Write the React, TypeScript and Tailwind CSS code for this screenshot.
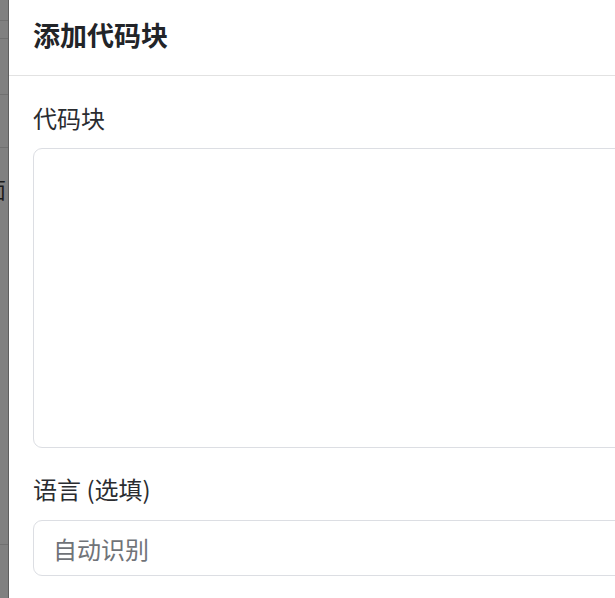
import React from 'react';

const font = { fontFamily: '"Noto Sans CJK SC", "Noto Sans", sans-serif' };

const BackdropStrip: React.FC = () => (
  <div className="relative w-[8px] shrink-0 bg-[#808080] overflow-hidden">
    <div className="h-[21px] border-b border-[#707070]" />
    <div className="h-[18px] border-b border-[#707070]" />
    <div className="h-[56px] border-b border-[#707070]" />
    <div className="h-[53px] border-b border-[#707070]" />
    <div className="h-[397px] border-b border-[#707070]" />
    <div className="absolute left-[-16px] top-[174px] text-[22px] leading-[28px] text-[#1a1a1a]" style={font}>
      面
    </div>
  </div>
);

export default function App() {
  return (
    <div className="flex h-[598px] w-full overflow-hidden bg-white" style={font}>
      <BackdropStrip />
      <div className="w-[900px] shrink-0 border-l border-[#5e5e5e] bg-white">
        <div className="h-[76px] border-b border-[#e2e2e2] px-[24px] pt-[15px]">
          <h2 className="text-[27px] font-bold leading-[40px] text-[#222428]">添加代码块</h2>
        </div>
        <div className="px-[24px] pt-[24px]">
          <label className="block text-[24px] leading-[36px] text-[#2a2c30]">代码块</label>
          <textarea className="mt-[12px] block h-[300px] w-full resize-none rounded-[9px] border border-[#dcdee3] bg-white outline-none" />
          <label className="mt-[23px] block text-[24px] leading-[36px] text-[#2a2c30]">语言 (选填)</label>
          <input
            className="mt-[13px] block h-[56px] w-full rounded-[9px] border border-[#dcdee3] bg-white px-[19px] text-[24px] text-[#2a2c30] outline-none placeholder:text-[#707378]"
            placeholder="自动识别"
          />
        </div>
      </div>
    </div>
  );
}
